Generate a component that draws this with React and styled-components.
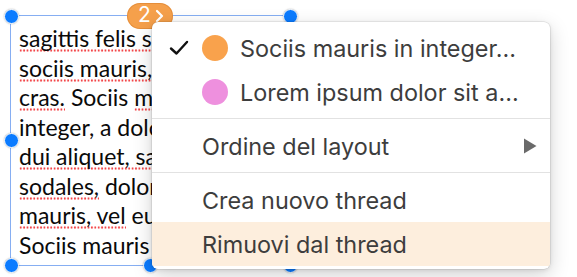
import styled, { createGlobalStyle } from "styled-components";

const GlobalStyle = createGlobalStyle`
  html, body {
    margin: 0;
    padding: 0;
    background: #fff;
  }
  * {
    box-sizing: border-box;
  }
`;

const Canvas = styled.div`
  position: relative;
  width: 577px;
  height: 277px;
  overflow: hidden;
  background: #fff;
`;

const TextFrame = styled.div`
  position: absolute;
  left: 10px;
  top: 15px;
  width: 281px;
  height: 251px;
  border: 1px solid #86aef2;
  overflow: hidden;
`;

const Body = styled.div`
  height: 239px;
  overflow: hidden;
  padding: 8px 0 0 8px;
  font-family: Lato, "Liberation Sans", sans-serif;
  font-size: 23px;
  line-height: 29.5px;
  color: #0a0a0a;
  white-space: nowrap;
`;

const Line = styled.div``;

const Misspelled = styled.span`
  background-image: radial-gradient(circle, #f2474a 0.9px, transparent 1.3px);
  background-size: 3.4px 3px;
  background-repeat: repeat-x;
  background-position: 0 100%;
`;

const Handle = styled.span`
  position: absolute;
  left: ${({ x }) => x}px;
  top: ${({ y }) => y}px;
  width: 15px;
  height: 15px;
  margin: -7.5px 0 0 -7.5px;
  border-radius: 50%;
  background: #0b7bff;
  border: 1.5px solid #fff;
  box-shadow: 0 0 1.5px rgba(0, 0, 0, 0.35);
`;

const ThreadBadge = styled.div`
  position: absolute;
  left: 127px;
  top: 3px;
  width: 46px;
  height: 26px;
  border-radius: 13px;
  background: #f5a04b;
  box-shadow: inset 0 0 0 1px rgba(200, 110, 30, 0.35);
  color: #fff;
  display: flex;
  align-items: flex-start;
  justify-content: center;
  gap: 4px;
  padding: 1px 0 0 2px;
  font-family: Inter, "Liberation Sans", sans-serif;
  font-size: 21px;
  line-height: 22px;
`;

const Menu = styled.div`
  position: absolute;
  left: 152px;
  top: 22px;
  width: 398px;
  padding: 4px 0 3px;
  background: #fff;
  border-radius: 6px;
  box-shadow: 0 0 0 0.5px rgba(0, 0, 0, 0.12), 0 6px 20px rgba(0, 0, 0, 0.18),
    0 1px 4px rgba(0, 0, 0, 0.1);
  font-family: Inter, "Liberation Sans", sans-serif;
  font-size: 23.4px;
  color: #3d3d3d;
  overflow: hidden;
`;

const Item = styled.div`
  height: 44px;
  display: flex;
  align-items: center;
  padding-right: 13px;
  background: ${({ active }) => (active ? "#fdeedd" : "transparent")};
`;

const CheckSlot = styled.span`
  width: 50px;
  flex: none;
  display: flex;
  align-items: center;
  padding-left: 17px;
`;

const Dot = styled.span`
  width: 26px;
  height: 26px;
  flex: none;
  border-radius: 50%;
  margin-right: 12px;
  background: ${({ color }) => color};
`;

const Label = styled.span`
  flex: 1;
  white-space: nowrap;
`;

const Separator = styled.div`
  height: 1px;
  margin: 4px 0 5px;
  background: #e2e2e2;
`;

const Check = () => (
  <svg width="20" height="16" viewBox="0 0 20 16">
    <path
      d="M2 8.5 L7.5 13.5 L18 2"
      fill="none"
      stroke="#111"
      strokeWidth="2.4"
      strokeLinecap="round"
      strokeLinejoin="round"
    />
  </svg>
);

const Chevron = () => (
  <svg width="9" height="14" viewBox="0 0 9 14" style={{ marginTop: 5 }}>
    <path
      d="M2 2 L7 7 L2 12"
      fill="none"
      stroke="#fff"
      strokeWidth="2.2"
      strokeLinecap="round"
      strokeLinejoin="round"
    />
  </svg>
);

const SubmenuArrow = () => (
  <svg width="14" height="16" viewBox="0 0 14 16">
    <path d="M1 0.5 L13.5 8 L1 15.5 Z" fill="#6a6a6a" />
  </svg>
);

const lines = [
  [["sagittis felis sociis", true]],
  [["sociis mauris,", true], [" vel", false]],
  [["cras.", true], [" Sociis ", false], ["mauris", true]],
  [["integer, a dolor", false]],
  [["dui aliquet, sagittis", true]],
  [["sodales,", true], [" dolor sit", false]],
  [["mauris, vel", true], [" eu", false]],
  [["Sociis mauris", false]],
];

const threads = [
  { label: "Sociis mauris in integer...", color: "#f9a24c", checked: true },
  { label: "Lorem ipsum dolor sit a...", color: "#ee90de" },
];

const App = () => {
  return (
    <>
      <GlobalStyle />
      <Canvas>
        <TextFrame>
          <Body>
            {lines.map((parts, i) => (
              <Line key={i}>
                {parts.map(([text, wrong], j) =>
                  wrong ? (
                    <Misspelled key={j}>{text}</Misspelled>
                  ) : (
                    <span key={j}>{text}</span>
                  )
                )}
              </Line>
            ))}
          </Body>
        </TextFrame>

        <Handle x={11} y={16} />
        <Handle x={150} y={16} />
        <Handle x={290} y={16} />
        <Handle x={11} y={140} />
        <Handle x={11} y={265} />
        <Handle x={150} y={265} />
        <Handle x={290} y={265} />

        <ThreadBadge>
          <span>2</span>
          <Chevron />
        </ThreadBadge>

        <Menu>
          {threads.map((t) => (
            <Item key={t.label}>
              <CheckSlot>{t.checked && <Check />}</CheckSlot>
              <Dot color={t.color} />
              <Label>{t.label}</Label>
            </Item>
          ))}
          <Separator />
          <Item>
            <CheckSlot />
            <Label>Ordine del layout</Label>
            <SubmenuArrow />
          </Item>
          <Separator />
          <Item>
            <CheckSlot />
            <Label>Crea nuovo thread</Label>
          </Item>
          <Item active>
            <CheckSlot />
            <Label>Rimuovi dal thread</Label>
          </Item>
        </Menu>
      </Canvas>
    </>
  );
};

export default App;
